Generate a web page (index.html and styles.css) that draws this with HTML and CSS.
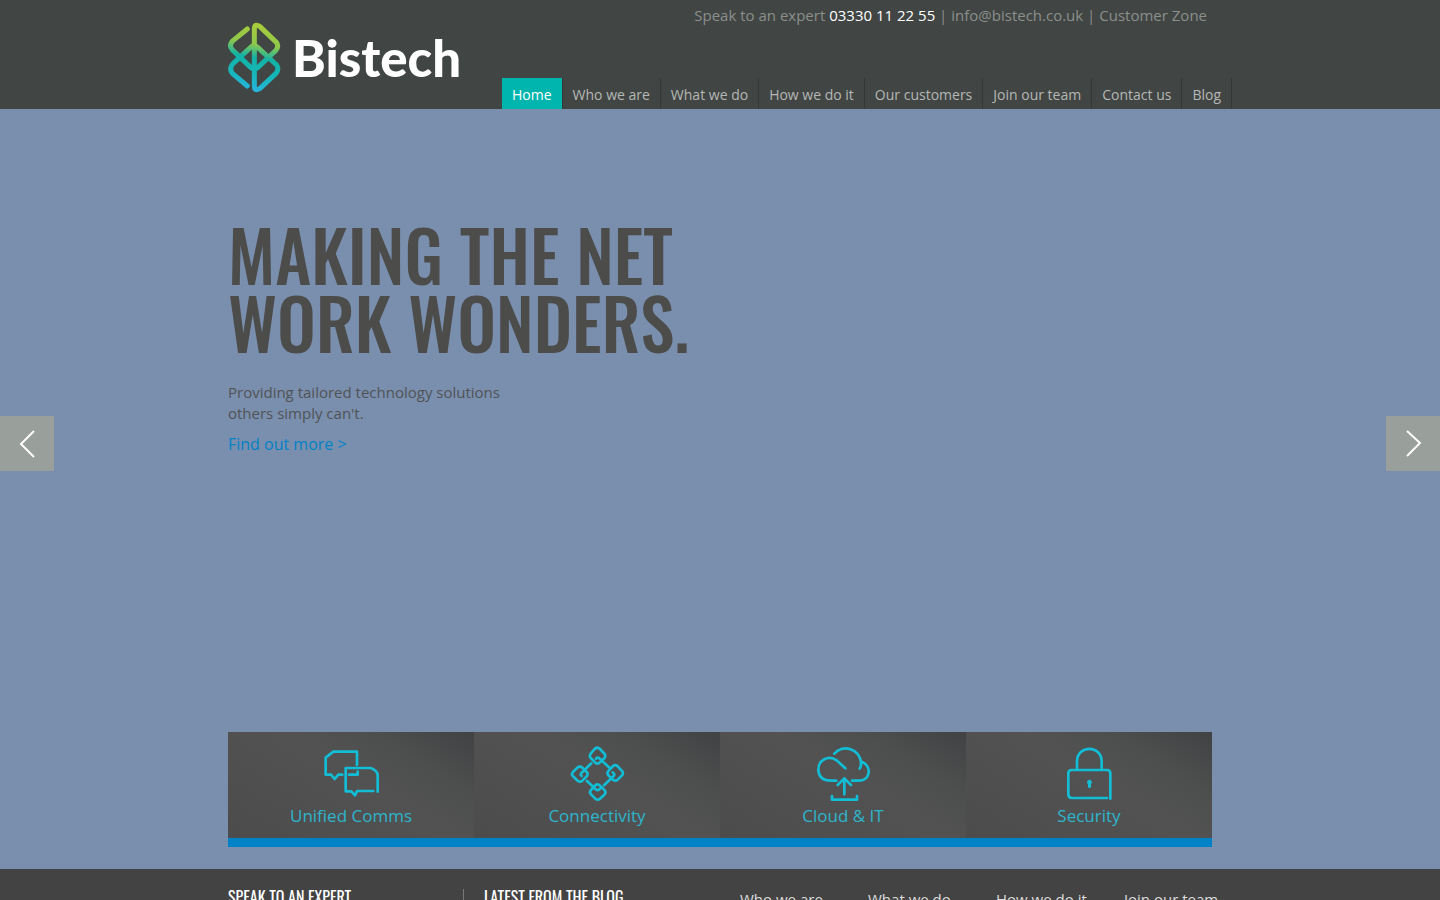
FILE: index.html
```html
<!DOCTYPE html>
<html lang="en">
<head>
<meta charset="utf-8">
<title>Bistech</title>
<link rel="stylesheet" href="styles.css">
</head>
<body>
<header class="header">
  <div class="wrap header-row">
    <a class="logo" href="#">
      <svg class="logo-mark" viewBox="24 36 162 213" fill="none" stroke="url(#mark)" stroke-width="15" stroke-linecap="round" stroke-linejoin="round" aria-hidden="true">
        <defs>
          <linearGradient id="mark" gradientUnits="userSpaceOnUse" x1="120" y1="40" x2="85" y2="245">
            <stop offset="0" stop-color="#a9cb3c"/>
            <stop offset=".3" stop-color="#8fc84a"/>
            <stop offset=".5" stop-color="#12b2a6"/>
            <stop offset=".72" stop-color="#16b6b8"/>
            <stop offset="1" stop-color="#28b4e0"/>
          </linearGradient>
        </defs>
        <path d="M82 57L39 92Q27 103 34 115Q37 122 48 130L92 172Q103 182 114 172L167 122Q178 109 169 97L120 50Q103 38 103 58V227Q103 246 120 235L168 190Q178 178 170 165L114 113Q103 102 92 112L39 161Q26 175 37 190L82 228"/>
      </svg>
      <span class="logo-name">Bistech</span>
    </a>
    <div class="header-side">
      <p class="contact">Speak to an expert <strong class="phone">03330 11 22 55</strong> | <a href="#">info@bistech.co.uk</a> | <a href="#">Customer Zone</a></p>
      <nav class="nav">
        <a class="nav-link active" href="#">Home</a>
        <a class="nav-link" href="#">Who we are</a>
        <a class="nav-link" href="#">What we do</a>
        <a class="nav-link" href="#">How we do it</a>
        <a class="nav-link" href="#">Our customers</a>
        <a class="nav-link" href="#">Join our team</a>
        <a class="nav-link" href="#">Contact us</a>
        <a class="nav-link" href="#">Blog</a>
      </nav>
    </div>
  </div>
</header>
<main class="hero">
  <button class="arrow prev" aria-label="Previous slide"><svg viewBox="0 0 54 55" width="54" height="55"><path d="M34 15L21 28L34 41"/></svg></button>
  <button class="arrow next" aria-label="Next slide"><svg viewBox="0 0 54 55" width="54" height="55"><path d="M21 15L34 27L21 40"/></svg></button>
  <div class="wrap hero-body">
    <section class="pitch">
      <h1 class="title">MAKING THE NET<br>WORK WONDERS.</h1>
      <p class="lead">Providing tailored technology solutions<br>others simply can't.</p>
      <a class="more" href="#">Find out more &gt;</a>
    </section>
    <div class="tiles">
      <a class="tile" href="#">
        <svg class="tile-icon" viewBox="279 57 180 180" aria-hidden="true"><path d="M387 120V80H316L293 98V149H309L320 162L331 149H343M363 149H389V140M436 198H387L381 211L370 199H353V129H428Q448 136 449 151V200"/></svg>
        <span>Unified Comms</span>
      </a>
      <a class="tile" href="#">
        <svg class="tile-icon" viewBox="279 57 180 180" aria-hidden="true"><path d="M363 71Q371 65 378 72L392 87Q396 93 391 100L378 112Q371 119 364 113L350 99Q345 93 350 86ZM404 126L377 101Q371 95 366 101M311 127Q318 122 325 128L339 142Q343 148 338 154L325 167Q318 173 311 167L297 154Q291 148 297 141ZM352 115L323 143Q317 149 323 153M417 123Q424 118 431 124L445 139Q449 145 444 151L431 164Q424 170 417 164L403 151Q398 145 403 138ZM390 181L419 153Q424 147 416 142M364 181Q371 175 378 182L392 196Q397 202 391 209L378 221Q371 227 364 221L351 208Q345 202 351 195ZM339 168L365 193Q372 199 378 191"/></svg>
        <span>Connectivity</span>
      </a>
      <a class="tile" href="#">
        <svg class="tile-icon" viewBox="279 57 180 180" aria-hidden="true"><path d="M343 86C369 56 420 71 423 114Q424 123 419 131M427 111C455 124 453 167 415 167H396M376 130L350 106C326 89 294 104 295 136Q298 167 333 167H349M373 208V160M353 180L373 160L393 180M336 213V224H411V213"/></svg>
        <span>Cloud &amp; IT</span>
      </a>
      <a class="tile" href="#">
        <svg class="tile-icon" viewBox="279 57 180 180" aria-hidden="true"><path d="M333 129V110C333 59 407 59 407 110V129M433 221V145Q433 135 423 135H317Q307 135 307 145V208Q307 219 317 219H423"/><path class="keyhole" d="M370 164a8 8 0 0 1 5 14v9q-5 5-9 0v-9a8 8 0 0 1 4-14z"/></svg>
        <span>Security</span>
      </a>
    </div>
  </div>
</main>
<footer class="footer">
  <div class="wrap footer-row">
    <h2 class="footer-title expert">SPEAK TO AN EXPERT</h2>
    <h2 class="footer-title blog">LATEST FROM THE BLOG</h2>
    <nav class="footer-nav">
      <a href="#">Who we are</a>
      <a href="#">What we do</a>
      <a href="#">How we do it</a>
      <a href="#">Join our team</a>
    </nav>
  </div>
</footer>
</body>
</html>
```
FILE: styles.css
```css
* { box-sizing: border-box; }
body {
  margin: 0;
  max-height: 100vh;
  overflow: hidden;
  background: #434343;
  font-family: "Open Sans", "Noto Sans", sans-serif;
  font-weight: 400;
}
a { color: inherit; text-decoration: none; }
h1, h2, p { margin: 0; }
.wrap { max-width: 984px; margin: 0 auto; }
.header { background: #414543; }
.header-row { display: flex; justify-content: space-between; }
.logo { display: flex; align-items: flex-start; gap: 10px; padding-top: 22px; color: #fff; }
.logo-mark { width: 54px; height: 71px; }
.logo-name { padding-top: 4px; font: 900 51px/64px Lato, sans-serif; }
.header-side { display: flex; flex-direction: column; justify-content: space-between; align-items: flex-end; min-height: 109px; margin-right: -20px; }
.contact { padding: 3px 25px 0 0; color: #8b908d; font-size: 15px; line-height: 24px; }
.phone { color: #fff; font-weight: 400; }
.nav { display: flex; }
.nav-link { padding: 6px 10px 3px; border-right: 1px solid #343736; color: #b5b8b6; font-size: 14px; line-height: 22px; white-space: nowrap; }
.nav-link.active { background: #00b5ad; color: #fff; }
.hero { position: relative; background: #7a8fae; }
.hero-body { display: flex; flex-direction: column; justify-content: space-between; min-height: 760px; padding: 111px 0 22px; }
.title { color: #4c4c4b; font-family: Oswald, "Roboto Condensed", "Liberation Sans Narrow", sans-serif; font-size: 69px; font-weight: 500; line-height: 68px; white-space: nowrap; }
.lead { padding-top: 26px; color: #505355; font-size: 15px; line-height: 21px; }
.more { display: block; padding-top: 8px; color: #0082c6; font-size: 16px; line-height: 24px; }
.arrow { position: absolute; top: 307px; padding: 0; border: 0; background: #999f9a; cursor: pointer; }
.arrow svg { display: block; fill: none; stroke: #fff; stroke-width: 2; }
.prev { left: 0; }
.next { right: 0; }
.tiles { display: grid; grid-template-columns: repeat(4, 1fr); border-bottom: 9px solid #0082c6; }
.tile { display: flex; flex-direction: column; align-items: center; padding: 12px 0 10px; background: linear-gradient(32deg, #4c4c4c 0%, #525252 55%, #4d4e4e 75%, #414243 100%); color: #2db5cc; font-size: 17px; line-height: 24px; }
.tile-icon { width: 60px; height: 60px; fill: none; stroke: #12bdd6; stroke-width: 8; stroke-linejoin: round; stroke-linecap: round; }
.tile-icon .keyhole { fill: #12bdd6; stroke: none; }
.footer { background: #434343; color: #fff; }
.footer-row { display: grid; grid-template-columns: 236px 276px 1fr; padding: 20px 0 24px; }
.footer-title { font-family: Oswald, "Roboto Condensed", "Liberation Sans Narrow", sans-serif; font-size: 16px; font-weight: 400; line-height: 16px; white-space: nowrap; }
.expert { border-right: 1px solid #777; }
.blog { padding-left: 20px; }
.footer-nav { display: grid; grid-template-columns: repeat(4, 128px); color: #ddd; font-size: 15px; line-height: 20px; }
```
